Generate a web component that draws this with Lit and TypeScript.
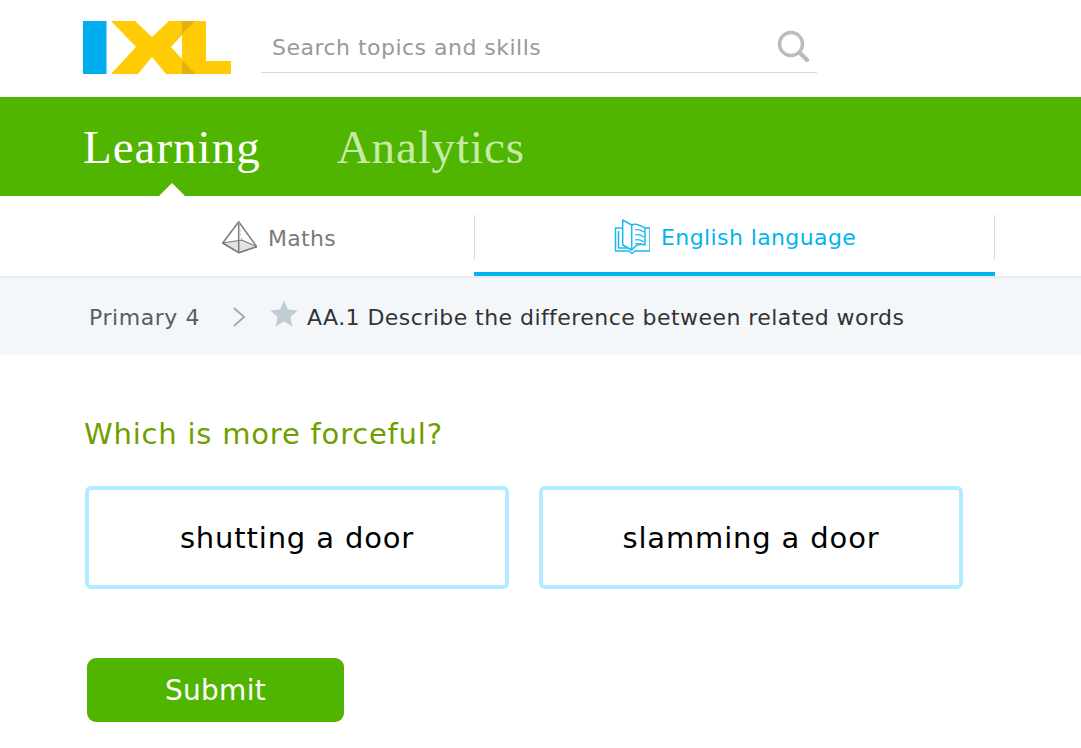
import { LitElement, html, css } from "lit";
import { customElement } from "lit/decorators.js";

@customElement("app-root")
export class AppRoot extends LitElement {
  static styles = css`
    :host { display: block; width: 1081px; height: 748px; overflow: hidden; background: #fff; font-family: "DejaVu Sans", Verdana, sans-serif; }
    .top { height: 97px; display: flex; align-items: flex-start; padding-left: 83px; box-sizing: border-box; }
    .logo { display: block; margin-top: 20px; }
    .search { margin: 22px 0 0 29px; width: 556px; height: 51px; box-sizing: border-box; border-bottom: 1px solid #d9d9d9; display: flex; align-items: center; justify-content: space-between; padding: 0 7px 0 11px; color: #999; font-size: 22px; letter-spacing: 0.48px; }
    .green { height: 99px; background: #50b500; display: flex; padding-left: 83px; position: relative; align-items: center; gap: 76px; }
    .green span { color: #fff; font-family: "Liberation Serif", serif; font-size: 47px; letter-spacing: 1px; }
    .green span.off { color: #c6eaa9; letter-spacing: 0.9px; }
    .caret { position: absolute; left: 159px; bottom: 0; width: 0; height: 0; border: 13px solid transparent; border-top: 0; border-bottom-color: #fff; }
    .subjects { display: flex; height: 82px; box-sizing: border-box; border-bottom: 2px solid #e9ebec; }
    .maths { width: 474px; box-sizing: border-box; padding: 24px 0 0 221px; display: flex; align-items: flex-start; gap: 11px; color: #7a7a7a; font-size: 22px; letter-spacing: 0.3px; }
    .eng { width: 521px; height: 80px; box-sizing: border-box; border-bottom: 4px solid #00b4f0; position: relative; padding: 23px 0 0 140px; display: flex; align-items: flex-start; gap: 11px; color: #00b4f0; font-size: 22px; letter-spacing: 0.4px; }
    .eng::before, .eng::after { content: ""; position: absolute; top: 19px; width: 1px; height: 45px; background: #d9d9d9; }
    .eng::before { left: 0; }
    .eng::after { right: 0; }
    .label { line-height: 34px; margin-top: 2px; }
    .crumb { height: 77px; box-sizing: border-box; padding: 1px 0 0 89px; background: #f3f7fa; display: flex; align-items: center; font-size: 22px; color: #5c5c5c; letter-spacing: 0.55px; }
    .crumb .chev { margin: 0 24px 0 32px; display: block; }
    .crumb .star { margin-right: 9px; margin-top: -8px; display: block; }
    .crumb .skill { color: #333; letter-spacing: 0.44px; }
    .q { color: #6f9e00; font-size: 29px; letter-spacing: 0.8px; margin: 61px 0 0 84px; line-height: 36px; }
    .choices { display: flex; gap: 30px; margin: 34px 0 0 85px; }
    .choice { width: 424px; height: 103px; box-sizing: border-box; border: 4px solid #b0ebff; border-radius: 6px; display: flex; align-items: center; justify-content: center; font-size: 29px; letter-spacing: 0.85px; color: #000; }
    .submit { margin: 69px 0 0 87px; width: 257px; height: 64px; background: #50b500; color: #fff; border-radius: 9px; display: flex; align-items: center; justify-content: center; font-size: 28px; letter-spacing: 0.3px; }
  `;

  render() {
    return html`
      <div class="top">
        <svg class="logo" width="149" height="55" viewBox="83 20 149 55">
          <rect x="83" y="21" width="23.5" height="53" fill="#00aeef"/>
          <path d="M111 21H135L152 37L169 21H195L171 47L196 74H166L152 57L138 74H111L136 47Z" fill="#ffcb05"/>
          <path d="M182 21H206V61H231V74H182Z" fill="#ffcb05"/>
          <path d="M182 21H195L182 34Z M182 60L196 74H182Z" fill="#e2b40b"/>
        </svg>
        <div class="search">
          <span>Search topics and skills</span>
          <svg width="34" height="34" viewBox="0 0 34 34" fill="none" stroke="#bcbcbc">
            <circle cx="15" cy="14" r="11.5" stroke-width="3.4"/>
            <path d="M24 23L31 30" stroke-width="4.4" stroke-linecap="round"/>
          </svg>
        </div>
      </div>
      <div class="green">
        <span>Learning</span><span class="off">Analytics</span>
        <div class="caret"></div>
      </div>
      <div class="subjects">
        <div class="maths">
          <svg width="36" height="36" viewBox="0 0 36 36" fill="none" stroke="#7d7d7d" stroke-width="1.5" stroke-linejoin="round">
            <path d="M1.7 23L20.7 20L35.7 26.7L17.7 32.7Z" fill="#e3e3e3" stroke-width="1.2"/>
            <path d="M17.7 1.7L1.7 23L17.7 32.7L35.7 26.7Z"/>
            <path d="M17.7 1.7V32.7"/>
            <path d="M17.7 1.7L20.7 20" stroke="#bbb" stroke-width="1" stroke-dasharray="2 2"/>
          </svg>
          <span class="label">Maths</span>
        </div>
        <div class="eng">
          <svg width="36" height="36" viewBox="0 0 36 36" fill="none" stroke="#1cb8f0" stroke-width="1.5" stroke-linejoin="round">
            <path d="M8.7 1L17.7 6V31L8.7 26Z"/>
            <path d="M17.7 6C21 4 26 6 31 9V26C26 24 21 27 17.7 31"/>
            <path d="M8.7 9H1.5V32H15L18 34.5L21 32H36V9H31"/>
            <path d="M4.5 12V29H15"/>
            <path d="M21 11C24 10 27 11 30 13M21 16C24 15 27 16 30 18M21 21C24 20 27 21 30 23M21 25C24 24 27 25 30 26" stroke-width="1.2"/>
          </svg>
          <span class="label">English language</span>
        </div>
      </div>
      <div class="crumb">
        <span>Primary 4</span>
        <svg class="chev" width="14" height="22" viewBox="0 0 14 22" fill="none" stroke="#aaa" stroke-width="2"><path d="M2 2L12 11L2 20"/></svg>
        <svg class="star" width="28" height="27" viewBox="0 0 28 27"><path d="M14 0.5L18 9.6L27.5 10.4L20.4 16.9L22.5 26.5L14 21.5L5.5 26.5L7.6 16.9L0.5 10.4L10 9.6Z" fill="#bfcdd4"/></svg>
        <span class="skill">AA.1 Describe the difference between related words</span>
      </div>
      <div class="q">Which is more forceful?</div>
      <div class="choices">
        <div class="choice">shutting a door</div>
        <div class="choice">slamming a door</div>
      </div>
      <div class="submit">Submit</div>
    `;
  }
}
